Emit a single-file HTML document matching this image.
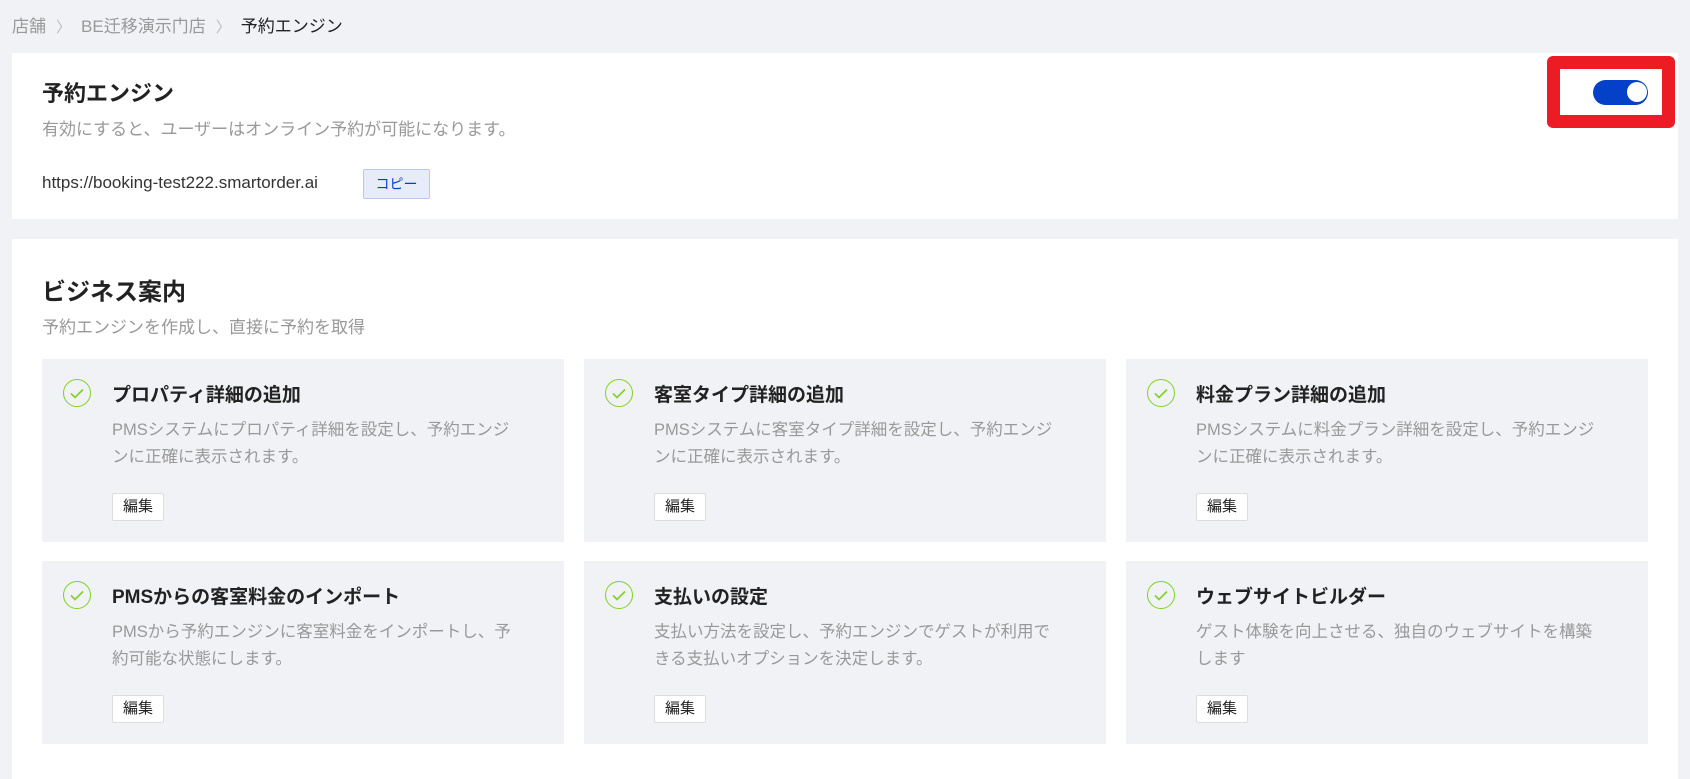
<!DOCTYPE html>
<html><head><meta charset="utf-8"><style>
*{margin:0;padding:0;box-sizing:border-box}
body{width:1690px;height:766px;overflow:hidden;background:#f0f2f5;font-family:"Liberation Sans","Noto Sans CJK JP",sans-serif;position:relative;color:#222}
.abs{position:absolute}
.bc{left:12px;top:12px;font-size:17px;color:#999;white-space:nowrap}
.bc span.sep{margin:0 10px;color:#bbb;font-size:15px}
.bc .cur{color:#222}
.p1{left:12px;top:53px;width:1666px;height:166px;background:#fff}
.p2{left:12px;top:239px;width:1666px;height:540px;background:#fff}
.card{position:absolute;width:522px;height:183px;background:#f0f2f5}
.card .ck{position:absolute;left:21px;top:20px;width:28px;height:28px;border:1.5px solid #7ed321;border-radius:50%}
.card .t{position:absolute;left:70px;top:21px;font-size:19px;font-weight:bold;color:#222;white-space:nowrap}
.card .d{position:absolute;left:70px;top:58px;width:440px;font-size:16.5px;line-height:27px;color:#999;white-space:nowrap}
.card .b{position:absolute;left:70px;top:134px;width:52px;height:28px;background:#fff;border:1px solid #ddd;border-radius:2px;font-size:15px;text-align:center;line-height:26px;color:#222}
</style></head><body>
<div class="abs bc">店舗<span class="sep">〉</span>BE迁移演示门店<span class="sep">〉</span><span class="cur">予約エンジン</span></div>
<div class="abs p1"></div>
<div class="abs" style="left:42px;top:76px;font-size:22px;font-weight:bold">予約エンジン</div>
<div class="abs" style="left:42px;top:115px;font-size:17px;color:#999">有効にすると、ユーザーはオンライン予約が可能になります。</div>
<div class="abs" style="left:42px;top:173px;font-size:17px;color:#333">https://booking-test222.smartorder.ai</div>
<div class="abs" style="left:363px;top:169px;width:67px;height:30px;background:#e6ecfa;border:1px solid #b8c8ee;border-radius:2px;font-size:14px;color:#0a3fc4;text-align:center;line-height:28px">コピー</div>
<div class="abs" style="left:1547px;top:56px;width:128px;height:72px;background:#ed1c24;border-radius:6px"></div>
<div class="abs" style="left:1560px;top:69px;width:102px;height:46px;background:#fff"></div>
<div class="abs" style="left:1593px;top:80px;width:55px;height:25px;background:#0540c8;border-radius:13px"></div>
<div class="abs" style="left:1627px;top:82px;width:20px;height:20px;background:#fff;border-radius:50%"></div>
<div class="abs p2"></div>
<div class="abs" style="left:42px;top:272px;font-size:24px;font-weight:bold">ビジネス案内</div>
<div class="abs" style="left:42px;top:313px;font-size:17px;color:#999">予約エンジンを作成し、直接に予約を取得</div>

<div class="card" style="left:42px;top:359px"><div class="ck"><svg width="28" height="28" viewBox="0 0 28 28" style="position:absolute;left:-1.5px;top:-1.5px"><path d="M8 14.5l4 4 8-8" fill="none" stroke="#7ed321" stroke-width="1.6"/></svg></div><div class="t">プロパティ詳細の追加</div><div class="d">PMSシステムにプロパティ詳細を設定し、予約エンジ<br>ンに正確に表示されます。</div><div class="b">編集</div></div>
<div class="card" style="left:584px;top:359px"><div class="ck"><svg width="28" height="28" viewBox="0 0 28 28" style="position:absolute;left:-1.5px;top:-1.5px"><path d="M8 14.5l4 4 8-8" fill="none" stroke="#7ed321" stroke-width="1.6"/></svg></div><div class="t">客室タイプ詳細の追加</div><div class="d">PMSシステムに客室タイプ詳細を設定し、予約エンジ<br>ンに正確に表示されます。</div><div class="b">編集</div></div>
<div class="card" style="left:1126px;top:359px"><div class="ck"><svg width="28" height="28" viewBox="0 0 28 28" style="position:absolute;left:-1.5px;top:-1.5px"><path d="M8 14.5l4 4 8-8" fill="none" stroke="#7ed321" stroke-width="1.6"/></svg></div><div class="t">料金プラン詳細の追加</div><div class="d">PMSシステムに料金プラン詳細を設定し、予約エンジ<br>ンに正確に表示されます。</div><div class="b">編集</div></div>
<div class="card" style="left:42px;top:561px"><div class="ck"><svg width="28" height="28" viewBox="0 0 28 28" style="position:absolute;left:-1.5px;top:-1.5px"><path d="M8 14.5l4 4 8-8" fill="none" stroke="#7ed321" stroke-width="1.6"/></svg></div><div class="t">PMSからの客室料金のインポート</div><div class="d">PMSから予約エンジンに客室料金をインポートし、予<br>約可能な状態にします。</div><div class="b">編集</div></div>
<div class="card" style="left:584px;top:561px"><div class="ck"><svg width="28" height="28" viewBox="0 0 28 28" style="position:absolute;left:-1.5px;top:-1.5px"><path d="M8 14.5l4 4 8-8" fill="none" stroke="#7ed321" stroke-width="1.6"/></svg></div><div class="t">支払いの設定</div><div class="d">支払い方法を設定し、予約エンジンでゲストが利用で<br>きる支払いオプションを決定します。</div><div class="b">編集</div></div>
<div class="card" style="left:1126px;top:561px"><div class="ck"><svg width="28" height="28" viewBox="0 0 28 28" style="position:absolute;left:-1.5px;top:-1.5px"><path d="M8 14.5l4 4 8-8" fill="none" stroke="#7ed321" stroke-width="1.6"/></svg></div><div class="t">ウェブサイトビルダー</div><div class="d">ゲスト体験を向上させる、独自のウェブサイトを構築<br>します</div><div class="b">編集</div></div>
</body></html>
